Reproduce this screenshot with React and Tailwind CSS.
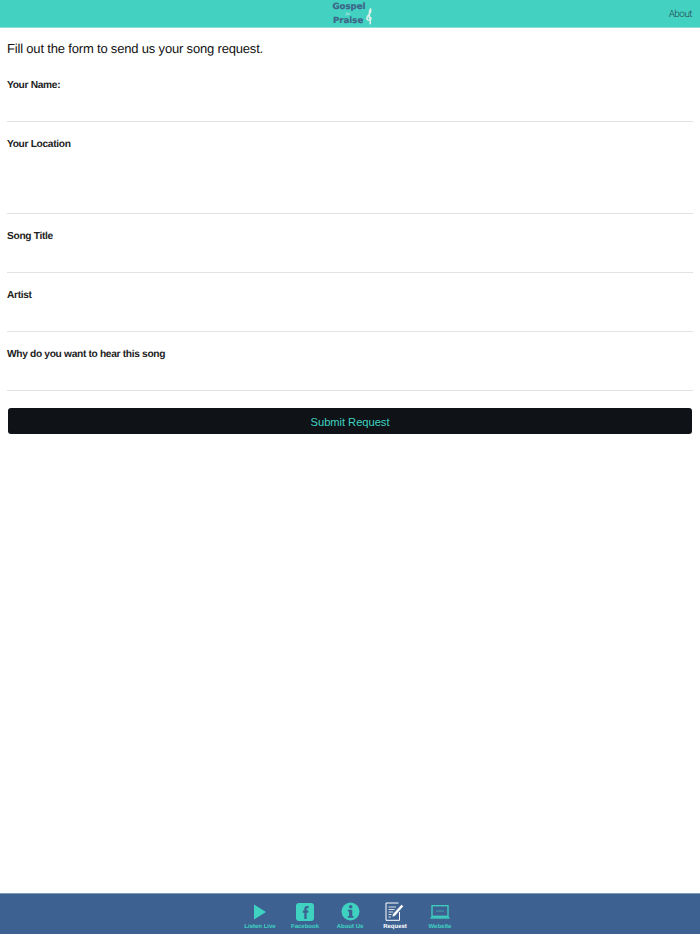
const fields = [
  { label: "Your Name:", height: "h-[59px]" },
  { label: "Your Location", height: "h-[92px]" },
  { label: "Song Title", height: "h-[59px]" },
  { label: "Artist", height: "h-[59px]" },
  { label: "Why do you want to hear this song", height: "h-[59px]" },
]

function PlayIcon() {
  return (
    <svg width="14" height="16" viewBox="0 0 14 16">
      <path d="M1 0.500L13 8 1 15.500z" fill="#3fd2c1" />
    </svg>
  )
}

function FacebookIcon() {
  return (
    <svg width="18" height="18" viewBox="0 0 18 18">
      <rect width="18" height="18" rx="3" fill="#3fd2c1" />
      <path d="M8.300 16V9.700H6.800V7.500h1.500V6c0-1.900 1-2.900 2.700-2.900h1.500v2.200h-1c-.7 0-.9.300-.9 1v1.200h1.900l-.3 2.200h-1.600V16z" fill="#3d6291" />
    </svg>
  )
}

function InfoIcon() {
  return (
    <svg width="19" height="19" viewBox="0 0 19 19">
      <circle cx="9.500" cy="9.500" r="9" fill="#3fd2c1" />
      <circle cx="9.700" cy="4.700" r="1.800" fill="#3d6291" />
      <path d="M6.800 7.800h4.500v6.200h1.200v1.700H6.800V14h1.300V9.500H6.800z" fill="#3d6291" />
    </svg>
  )
}

function RequestIcon() {
  return (
    <svg width="20" height="19" viewBox="0 0 20 19" fill="none" stroke="#fff">
      <path d="M14.500 10V18.300H1V1H13.500" strokeWidth="1" />
      <path d="M3.500 5h7.500M3.500 7.500h6M3.500 10h4.500M3.500 12.500h3M3.500 15h2.500" strokeWidth="0.800" />
      <path d="M7 15l.8-3L16.500 2.500l2 1.800L10 14z" fill="#fff" stroke="#3d6291" strokeWidth="0.500" />
    </svg>
  )
}

function LaptopIcon() {
  return (
    <svg width="20" height="14" viewBox="0 0 20 14" fill="none" stroke="#3fd2c1">
      <rect x="2" y="0.700" width="16" height="10.600" strokeWidth="1.300" />
      <path d="M0.500 12.900h19" strokeWidth="1.500" />
      <path d="M6 6h8" strokeWidth="1" opacity="0.600" />
    </svg>
  )
}

function Tab({ label, icon, active }) {
  return (
    <div className={`flex w-[45px] flex-col items-center ${active ? "text-white" : "text-[#3fd2c1]"}`}>
      <div className="flex h-[21px] items-center justify-center">{icon}</div>
      <span className="mt-[1px] whitespace-nowrap text-[6px] leading-[9px] font-bold">{label}</span>
    </div>
  )
}

function Logo() {
  return (
    <div className="relative ml-[5px] h-[27px] w-[42px] font-['DejaVu_Sans',sans-serif] font-bold text-[#3c6588] [-webkit-text-stroke:0.2px_#3c6588]">
      <span className="absolute top-[3px] left-[1px] text-[8.600px] leading-[9px]">Gospel</span>
      <span className="absolute top-[12px] left-[14px] font-['Liberation_Serif',serif] text-[4px] leading-[4px] font-normal text-[#e3f5f0] italic [-webkit-text-stroke:0px]">for</span>
      <span className="absolute top-[17px] left-[1.500px] text-[8.600px] leading-[9px]">Praise</span>
      <svg className="absolute top-[8px] left-[33.500px]" width="8" height="17" viewBox="0 0 8 17" fill="none" stroke="#dcefe9" strokeWidth="1.500">
        <path d="M4.500 16c1.500-.5 1-2 0-7.500C4 5 4.500 2 5.500 1c.8 1.500.3 3.500-1.500 5.500-1.500 1.500-2.500 3-2 4.500.5 1.500 3.500 1.500 4 0 .4-1.500-1.500-2.500-2.500-1.500" />
      </svg>
    </div>
  )
}

export default function App() {
  return (
    <div className="flex h-[934px] w-[700px] flex-col overflow-hidden bg-white font-['Liberation_Sans',sans-serif] [text-rendering:geometricPrecision]">
      <header className="relative flex h-[28px] shrink-0 items-center justify-center border-b border-[#8fe0d6] bg-[#43d2c2]">
        <Logo />
        <span className="absolute top-[8px] right-[8px] font-['Roboto',sans-serif] text-[10px] leading-[14px] font-light tracking-[-0.55px] text-[#24454b]">About</span>
      </header>

      <main className="flex-1 px-[7px]">
        <p className="mt-[12px] text-[13px] leading-[18px] tracking-[-0.18px] text-[#111]">Fill out the form to send us your song request.</p>
        <form className="mt-[5px]">
          {fields.map((field) => (
            <div key={field.label} className={`${field.height} border-b border-[#e2e2e2] pt-[16px]`}>
              <label className="block text-[10.200px] leading-[14px] font-bold tracking-[-0.32px] text-[#222]">{field.label}</label>
            </div>
          ))}
          <button type="button" className="mx-px mt-[17px] block h-[26px] w-[684px] rounded-[3px] bg-[#0f1216] pt-[2px] text-center text-[11.200px] tracking-[-0.05px] text-[#3fd2c1]">
            Submit Request
          </button>
        </form>
      </main>

      <footer className="flex h-[41px] shrink-0 justify-center border-t border-[#7f9ab8] bg-[#3d6291] pt-[7px]">
        <Tab label="Listen Live" icon={<PlayIcon />} />
        <Tab label="Facebook" icon={<FacebookIcon />} />
        <Tab label="About Us" icon={<InfoIcon />} />
        <Tab label="Request" active icon={<RequestIcon />} />
        <Tab label="Website" icon={<LaptopIcon />} />
      </footer>
    </div>
  )
}
